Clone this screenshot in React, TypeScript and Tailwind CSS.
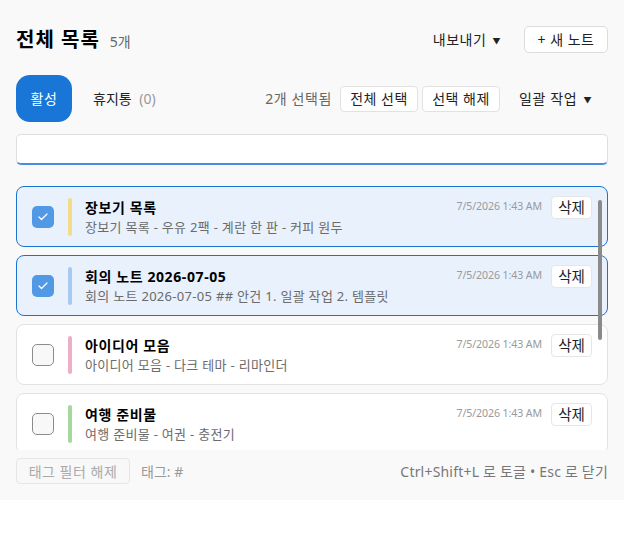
import { Check } from "lucide-react";

interface Note {
  id: number;
  title: string;
  preview: string;
  color: string;
  selected: boolean;
}

const notes: Note[] = [
  { id: 1, title: "장보기 목록", preview: "장보기 목록 - 우유 2팩 - 계란 한 판 - 커피 원두", color: "bg-[#f2dc86]", selected: true },
  { id: 2, title: "회의 노트 2026-07-05", preview: "회의 노트 2026-07-05 ## 안건 1. 일괄 작업 2. 템플릿", color: "bg-[#a9c9f2]", selected: true },
  { id: 3, title: "아이디어 모음", preview: "아이디어 모음 - 다크 테마 - 리마인더", color: "bg-[#efaec7]", selected: false },
  { id: 4, title: "여행 준비물", preview: "여행 준비물 - 여권 - 충전기", color: "bg-[#a6d79c]", selected: false },
];

function NoteCard({ note }: { note: Note }) {
  return (
    <div
      className={`flex items-center shrink-0 h-[61px] rounded-lg border px-[15px] ${
        note.selected ? "bg-[#e9f1fd] border-[#1a73d2]" : "bg-white border-[#e2e2e2]"
      }`}
    >
      {note.selected ? (
        <div className="w-[22px] h-[22px] rounded-[5px] bg-[#5199e4] flex items-center justify-center">
          <Check className="w-[12px] h-[12px] text-white" strokeWidth={2.5} />
        </div>
      ) : (
        <div className="w-[22px] h-[22px] rounded-[5px] border border-[#8c8c8c] bg-[#f8f8f8]" />
      )}
      <div className={`ml-[14px] w-[4px] h-[38px] rounded-full ${note.color}`} />
      <div className="ml-[13px] flex-1 min-w-0">
        <div className="flex items-center justify-between h-[23px]">
          <span className="text-[14px] font-bold text-black tracking-[0.6px]">{note.title}</span>
          <div className="flex items-center">
            <span className="text-[10.6px] text-[#9a9a9a] tracking-[-0.1px]">7/5/2026 1:43 AM</span>
            <button className="ml-[9px] w-[41px] h-[23px] rounded-[4px] border border-[#e6e6e6] bg-white text-[14.5px] text-[#222]">
              삭제
            </button>
          </div>
        </div>
        <div className="text-[13px] text-[#6b6b6b] mt-[-1px] whitespace-nowrap tracking-[0.3px]">{note.preview}</div>
      </div>
    </div>
  );
}

export default function App() {
  return (
    <div className="w-[640px] h-[540px] bg-white font-['Noto_Sans','Noto_Sans_CJK_KR',sans-serif]">
      <div className="w-[624px] h-[500px] bg-[#f9f9f9] flex flex-col px-4">
        {/* Header */}
        <div className="flex items-center justify-between mt-[26px] h-[27px]">
          <div className="flex items-baseline">
            <h1 className="text-[20px] font-bold text-black tracking-[1px]">전체 목록</h1>
            <span className="ml-[10px] text-[14px] text-[#666]">5개</span>
          </div>
          <div className="flex items-center">
            <span className="text-[14px] text-[#222] tracking-[0.5px]">
              내보내기 <span className="text-[8px] ml-[2px] align-middle">▼</span>
            </span>
            <button className="ml-[23px] w-[84px] h-[27px] rounded-[5px] border border-[#dcdcdc] bg-white text-[14px] text-[#222] tracking-[0.5px]">
              + 새 노트
            </button>
          </div>
        </div>

        {/* Tabs + bulk */}
        <div className="flex items-center justify-between mt-[22px] h-[47px]">
          <div className="flex items-center">
            <button className="w-[56px] h-[47px] rounded-[14px] bg-[#1976d6] text-white text-[14px] tracking-[0.5px]">활성</button>
            <span className="ml-[21px] text-[14px] text-[#222]">
              휴지통 <span className="ml-[4px] text-[#999]">(0)</span>
            </span>
          </div>
          <div className="flex items-center">
            <span className="text-[14px] text-[#666] tracking-[0.6px]">2개 선택됨</span>
            <button className="ml-[8px] w-[78px] h-[26px] rounded-[4px] border border-[#e2e2e2] bg-white text-[14px] text-[#222] tracking-[0.5px]">
              전체 선택
            </button>
            <button className="ml-[4px] w-[78px] h-[26px] rounded-[4px] border border-[#e2e2e2] bg-white text-[14px] text-[#222] tracking-[0.5px]">
              선택 해제
            </button>
            <span className="ml-[19px] mr-[16px] text-[14px] text-[#222] tracking-[0.6px]">
              일괄 작업 <span className="text-[8px] ml-[2px] align-middle">▼</span>
            </span>
          </div>
        </div>

        {/* Search */}
        <input
          className="mt-[12px] h-[31px] rounded-[5px] border border-[#dedede] border-b-2 border-b-[#4a8fdf] bg-white px-3 text-[14px] outline-none"
          defaultValue=""
        />

        {/* List */}
        <div className="relative mt-[21px] h-[264px] overflow-hidden flex flex-col gap-[8px]">
          {notes.map((n) => (
            <NoteCard key={n.id} note={n} />
          ))}
          <div className="absolute right-[6px] top-[14px] w-[4px] h-[140px] rounded-full bg-[#8a8a8a]" />
        </div>

        {/* Footer */}
        <div className="flex items-center justify-between mt-[8px] h-[26px]">
          <div className="flex items-center">
            <button
              disabled
              className="w-[114px] h-[26px] rounded-[4px] border border-[#e6e6e6] bg-[#f8f8f8] text-[14px] text-[#aaa] tracking-[0.5px]"
            >
              태그 필터 해제
            </button>
            <span className="ml-[11px] text-[14px] text-[#999]">태그: #</span>
          </div>
          <span className="text-[14px] text-[#777] tracking-[0.2px]">Ctrl+Shift+L 로 토글 • Esc 로 닫기</span>
        </div>
      </div>
    </div>
  );
}
